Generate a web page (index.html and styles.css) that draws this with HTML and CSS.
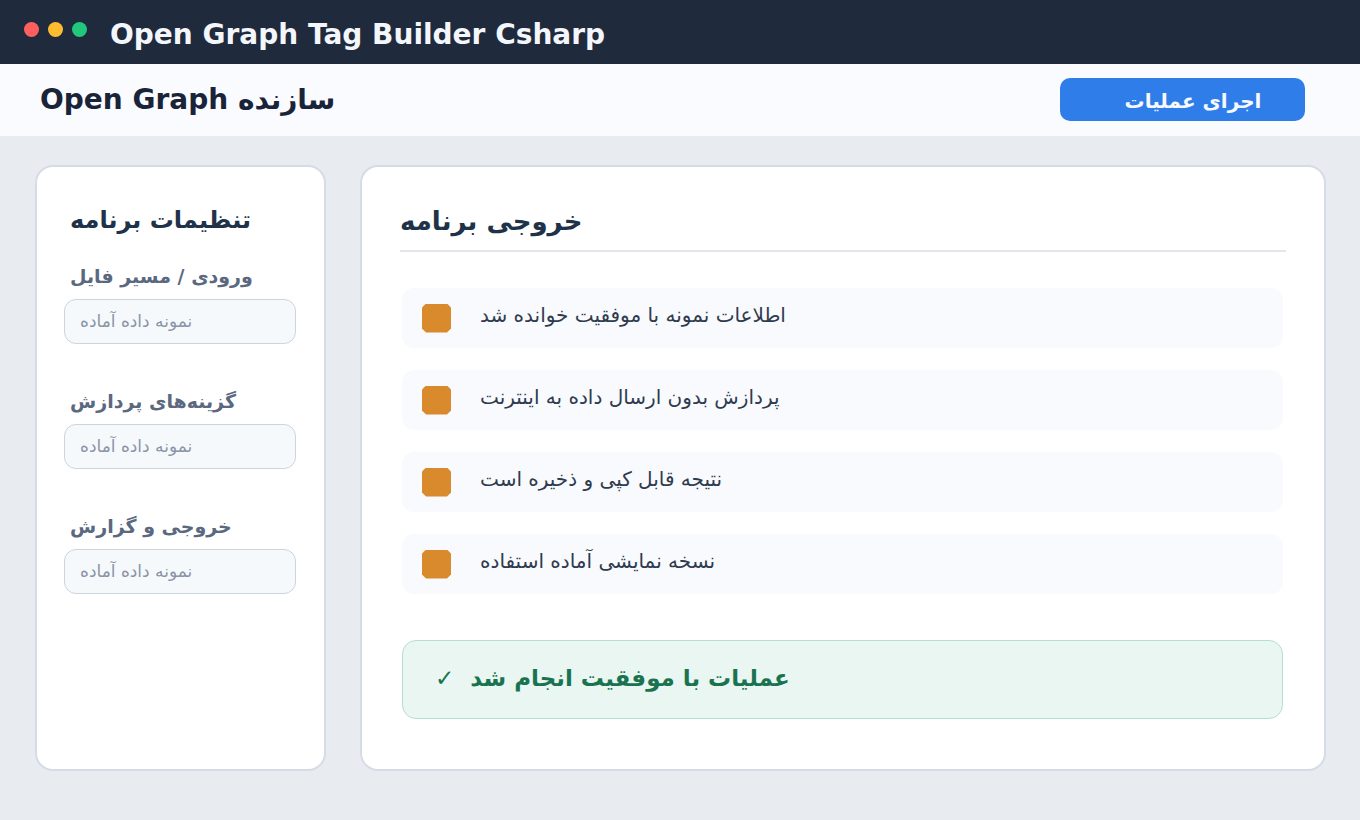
FILE: index.html
```html
<!DOCTYPE html>
<html lang="fa">
<head>
    <title>Open Graph Tag Builder Csharp</title>
    <link rel="stylesheet" href="styles.css">
</head>
<body>
    <header class="titlebar">
        <div class="dots">
            <span class="dot red"></span>
            <span class="dot yellow"></span>
            <span class="dot green"></span>
        </div>
        <div class="app-name">Open Graph Tag Builder Csharp</div>
    </header>

    <div class="toolbar">
        <h1 dir="rtl">سازنده Open Graph</h1>
        <button class="run-btn">اجرای عملیات</button>
    </div>

    <main class="content">
        <aside class="card side">
            <h2>تنظیمات برنامه</h2>

            <div class="field">
                <label>ورودی / مسیر فایل</label>
                <div class="input">نمونه داده آماده</div>
            </div>
            <div class="field">
                <label>گزینه‌های پردازش</label>
                <div class="input">نمونه داده آماده</div>
            </div>
            <div class="field">
                <label>خروجی و گزارش</label>
                <div class="input">نمونه داده آماده</div>
            </div>
        </aside>

        <section class="card output">
            <h2>خروجی برنامه</h2>

            <ul class="results">
                <li><span class="mark"></span>اطلاعات نمونه با موفقیت خوانده شد</li>
                <li><span class="mark"></span>پردازش بدون ارسال داده به اینترنت</li>
                <li><span class="mark"></span>نتیجه قابل کپی و ذخیره است</li>
                <li><span class="mark"></span>نسخه نمایشی آماده استفاده</li>
            </ul>

            <div class="success">
                <span class="check">✓</span>
                <span>عملیات با موفقیت انجام شد</span>
            </div>
        </section>
    </main>
</body>
</html>
```

FILE: styles.css
```css
* {
    box-sizing: border-box;
}

body {
    margin: 0;
    height: 820px;
    overflow: hidden;
    background: #e8ebf0;
    font-family: 'DejaVu Sans', sans-serif;
}

.titlebar {
    height: 64px;
    background: #1f2a3d;
    display: flex;
    align-items: center;
    padding-left: 24px;
}

.dots {
    display: flex;
    gap: 9px;
    margin-bottom: 6px;
}

.dot {
    width: 15px;
    height: 15px;
    border-radius: 50%;
}

.red { background: #ff5f5f; }
.yellow { background: #febc2e; }
.green { background: #22c77e; }

.app-name {
    margin: 4px 0 0 23px;
    color: #f3f6fb;
    font-size: 28px;
    font-weight: bold;
}

.toolbar {
    height: 72px;
    background: #f9fbff;
    display: flex;
    align-items: center;
    justify-content: space-between;
    padding: 0 55px 0 40px;
}

.toolbar h1 {
    margin: 0 0 2px;
    color: #1a2438;
    font-size: 28px;
}

.run-btn {
    width: 245px;
    height: 43px;
    margin-bottom: 2px;
    padding: 4px 0 0 21px;
    border: none;
    border-radius: 10px;
    background: #2f7de9;
    color: #f6f9ff;
    font-family: inherit;
    font-size: 20px;
    font-weight: bold;
}

.content {
    display: flex;
    gap: 34px;
    padding: 29px 34px 0 35px;
}

.card {
    height: 606px;
    background: #fff;
    border: 2px solid #d6dce7;
    border-radius: 18px;
}

.side {
    width: 291px;
    padding: 39px 28px 0 27px;
}

.side h2 {
    margin: 0 0 31px 6px;
    color: #1e3249;
    font-size: 24px;
}

.field {
    margin-bottom: 46px;
}

.field label {
    display: block;
    margin: 0 0 12px 6px;
    color: #5a6880;
    font-size: 19px;
    font-weight: bold;
}

.input {
    height: 45px;
    padding-left: 15px;
    line-height: 43px;
    background: #f6f9fc;
    border: 1px solid #ccd4de;
    border-radius: 12px;
    color: #8a94a6;
    font-size: 17px;
}

.output {
    flex: 1;
    padding: 39px 38px 0 38px;
}

.output h2 {
    margin: 0;
    height: 46px;
    border-bottom: 2px solid #e2e6ea;
    color: #1e3249;
    font-size: 26px;
}

.results {
    list-style: none;
    margin: 36px 3px 0 2px;
    padding: 0;
    display: flex;
    flex-direction: column;
    gap: 22px;
}

.results li {
    height: 60px;
    padding: 0 20px 6px;
    display: flex;
    align-items: center;
    background: #f8fafd;
    border-radius: 12px;
    color: #2f3b4f;
    font-size: 20px;
}

.mark {
    width: 29px;
    height: 29px;
    margin: 6px 29px 0 0;
    background: #d98a2c;
    clip-path: polygon(4px 0, 25px 0, 100% 4px, 100% 25px, 25px 100%, 4px 100%, 0 25px, 0 4px);
}

.success {
    height: 79px;
    margin: 46px 3px 0 2px;
    padding: 0 32px 4px;
    display: flex;
    align-items: center;
    gap: 16px;
    background: #e9f6f1;
    border: 1px solid #b5dfce;
    border-radius: 14px;
    color: #1a7350;
    font-size: 23px;
    font-weight: bold;
}

.check {
    font-weight: normal;
}
```
